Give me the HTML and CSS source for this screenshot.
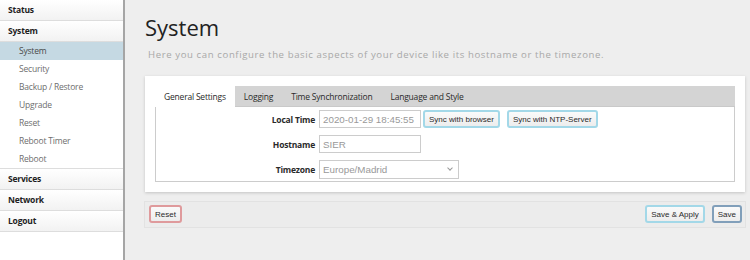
FILE: index.html
```html
<!DOCTYPE html>
<html lang="en">
<head>
  <meta charset="UTF-8" />
  <meta name="viewport" content="width=device-width, initial-scale=1.0"/>
  <title>System</title>
  <link rel="stylesheet" href="styles.css">
</head>
<body>
  <div class="sidebar">
    <ul class="menu">
      <li class="menu-top"><a href="#">Status</a></li>
      <li class="menu-top"><a href="#">System</a>
        <ul class="submenu">
          <li class="active"><a href="#">System</a></li>
          <li><a href="#">Security</a></li>
          <li><a href="#">Backup / Restore</a></li>
          <li><a href="#">Upgrade</a></li>
          <li><a href="#">Reset</a></li>
          <li><a href="#">Reboot Timer</a></li>
          <li><a href="#">Reboot</a></li>
        </ul>
      </li>
      <li class="menu-top"><a href="#">Services</a></li>
      <li class="menu-top"><a href="#">Network</a></li>
      <li class="menu-top"><a href="#">Logout</a></li>
    </ul>
  </div>

  <div class="main">
    <h2>System</h2>
    <p class="desc">Here you can configure the basic aspects of your device like its hostname or the timezone.</p>

    <div class="card">
      <ul class="tabs">
        <li class="tab active">General Settings</li>
        <li class="tab">Logging</li>
        <li class="tab">Time Synchronization</li>
        <li class="tab">Language and Style</li>
      </ul>

      <div class="tab-body">
        <div class="form-row">
          <label>Local Time</label>
          <input class="field" value="2020-01-29 18:45:55" readonly>
          <button type="button" class="btn btn-info btn-first">Sync with browser</button>
          <button type="button" class="btn btn-info">Sync with NTP-Server</button>
        </div>
        <div class="form-row">
          <label>Hostname</label>
          <input class="field" value="SIER">
        </div>
        <div class="form-row">
          <label>Timezone</label>
          <div class="select-wrap">
            <select class="field select"><option>Europe/Madrid</option></select>
          </div>
        </div>
      </div>
    </div>

    <div class="actions">
      <button type="button" class="btn btn-reset">Reset</button>
      <div class="actions-right">
        <button type="button" class="btn btn-info">Save &amp; Apply</button>
        <button type="button" class="btn btn-save">Save</button>
      </div>
    </div>
  </div>
</body>
</html>
```

FILE: styles.css
```css
* {
  box-sizing: border-box;
  margin: 0;
  padding: 0;
}

body {
  display: flex;
  min-height: 100vh;
  background: #eee;
  color: #333;
  font-family: 'Open Sans', sans-serif;
  font-size: 8.5px;
}

/* sidebar */
.sidebar {
  width: 125px;
  flex: none;
  background: #fff;
  border-right: 2px solid #a5a5a5;
}

.menu {
  list-style: none;
}

.menu-top > a {
  display: block;
  height: 21px;
  line-height: 20px;
  padding-left: 8px;
  font-weight: bold;
  font-size: 8.5px;
  letter-spacing: -0.2px;
  color: #1e1e1e;
  text-decoration: none;
  border-bottom: 1px solid #ddd;
  background: linear-gradient(#fff, #f2f2f2);
}

.submenu {
  list-style: none;
  border-bottom: 1px solid #ddd;
}

.submenu a {
  display: block;
  height: 18px;
  line-height: 18px;
  padding-left: 19px;
  font-size: 8.5px;
  letter-spacing: -0.2px;
  color: #6e6e6e;
  text-decoration: none;
}

.submenu .active a {
  background: #c5d9e3;
  color: #4a4a4a;
}

/* main area */
.main {
  flex: 1;
  padding: 0 4px 0 19px;
}

h2 {
  margin: 14px 0 0 1px;
  font-size: 22px;
  line-height: 26px;
  font-weight: normal;
  color: #222;
}

.desc {
  margin: 8px 0 0 4px;
  font-size: 9.6px;
  letter-spacing: 0.6px;
  line-height: 14px;
  color: #a8a8a8;
}

.card {
  margin: 14px 1px 0;
  padding: 10px;
  background: #fff;
  box-shadow: 0 1px 3px rgba(0,0,0,0.18);
}

.tabs {
  display: flex;
  list-style: none;
  height: 21px;
  background: #d4d4d4;
  border-bottom: 1px solid #c9c9c9;
}

.tab {
  padding: 0 9px;
  line-height: 21px;
  font-size: 8.5px;
  letter-spacing: -0.2px;
  color: #2a2a2a;
}

.tab.active {
  background: #fff;
  height: 21px;
}

.tab-body {
  display: flex;
  flex-direction: column;
  gap: 7px;
  padding: 3px 0 2px;
  border: 1px solid #ccc;
  border-top: none;
}

.form-row {
  display: flex;
  align-items: center;
}

.form-row label {
  flex: 0 0 159px;
  margin-right: 4px;
  text-align: right;
  font-weight: bold;
  font-size: 8.5px;
  letter-spacing: -0.2px;
  color: #2a2a2a;
}

.field {
  width: 102px;
  height: 18px;
  padding: 0 3px;
  border: 1px solid #ccc;
  background: #fff;
  color: #999;
  font-family: 'Liberation Sans', Arial, sans-serif;
  font-size: 9.8px;
  outline: none;
}

.select-wrap {
  position: relative;
}

.select {
  width: 140px;
  height: 19px;
  appearance: none;
  -webkit-appearance: none;
  border-radius: 0;
}

.select-wrap::after {
  content: '';
  position: absolute;
  right: 7px;
  top: 6px;
  width: 3px;
  height: 3px;
  border-right: 1px solid #999;
  border-bottom: 1px solid #999;
  transform: rotate(45deg);
}

/* buttons */
.btn {
  height: 18px;
  padding: 0 4px;
  border: 2px solid #a3d8e8;
  border-radius: 3px;
  background: linear-gradient(#fafafa, #ededed);
  color: #2a2a2a;
  font-family: 'Liberation Sans', Arial, sans-serif;
  font-size: 8px;
  cursor: pointer;
}

.btn + .btn {
  margin-left: 7px;
}

.btn-first {
  margin-left: 2px;
}

.btn-reset {
  border-color: #df9a9c;
}

.btn-save {
  border-color: #819fba;
}

.actions {
  display: flex;
  justify-content: space-between;
  margin-top: 9px;
  padding: 3px 3px 4px 4px;
  background: #ececec;
  border: 1px solid #e2e2e2;
}

.actions-right {
  display: flex;
}
```
